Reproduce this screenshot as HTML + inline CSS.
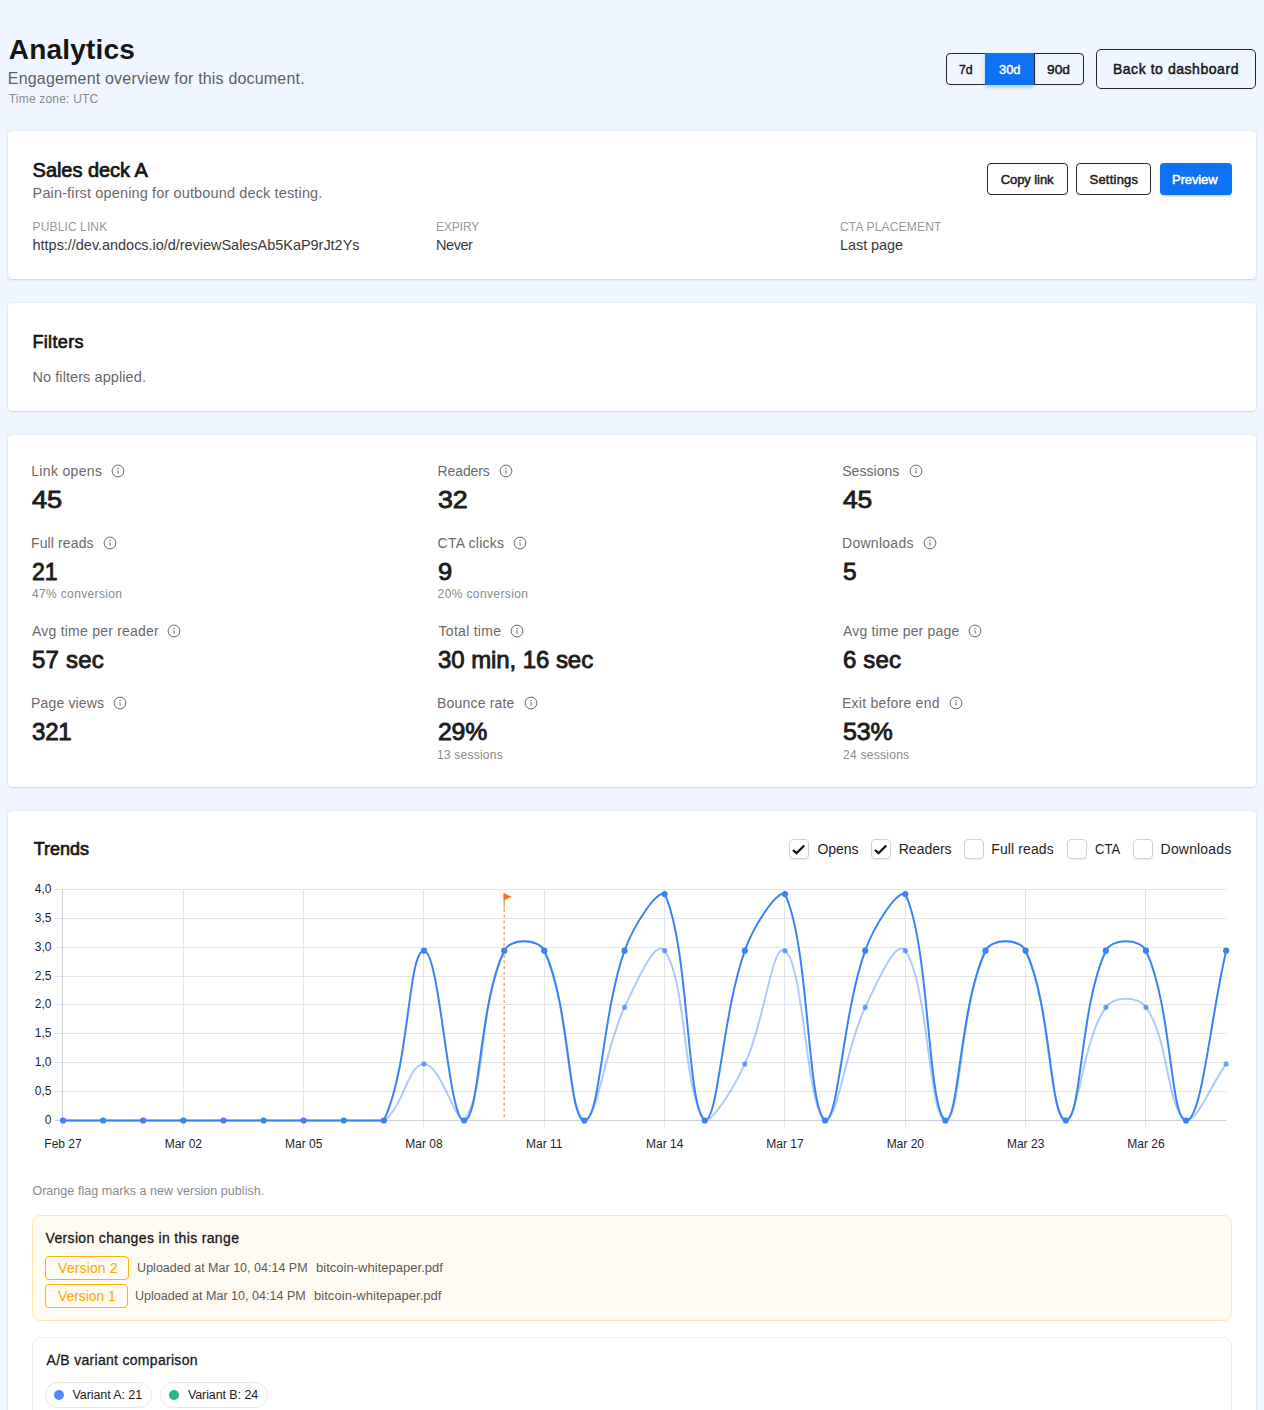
<!DOCTYPE html>
<html><head><meta charset="utf-8">
<style>
*{box-sizing:border-box;margin:0;padding:0}
html,body{width:1264px;height:1410px;overflow:hidden}
body{background:#eff6ff;font-family:"Liberation Sans",sans-serif;position:relative}
.t{position:absolute;white-space:nowrap;line-height:20px}
.card{position:absolute;left:8px;width:1248px;background:#fff;border-radius:4px;box-shadow:0 0 0 1px rgba(40,60,100,0.03),0 1px 2px rgba(30,40,70,0.14)}
.btn{position:absolute;border:1px solid #262626;border-radius:4px;background:transparent}
.blue{position:absolute;background:#0f71f3;border-radius:4px;box-shadow:0 2px 2px -1px rgba(15,113,243,0.4)}
.bt{position:absolute;white-space:nowrap;line-height:20px;font-weight:700;font-size:13px;color:#1a1a1a}
.ic{position:absolute;width:14px;height:14px}
.cb{position:absolute;width:20px;height:20px;border:1px solid #d2d2d2;border-radius:4px;background:#fff;box-shadow:0 1px 1px rgba(0,0,0,0.07)}
.cb svg{position:absolute;left:0;top:0}
.vbox{position:absolute;left:32px;top:1215px;width:1200px;height:106px;background:#fffaf2;border:1px solid #fde6ad;border-radius:8px}
.badge{position:absolute;border:1px solid #ffb10a;border-radius:4px}
.abbox{position:absolute;left:32px;top:1337px;width:1200px;height:120px;background:#fff;border:1px solid #ececec;border-radius:8px}
.pill{position:absolute;border:1px solid #e8e8e8;border-radius:13px;background:#fff}
.dot{position:absolute;width:10px;height:10px;border-radius:50%}
</style></head><body>
<!-- header buttons -->
<div class="btn" style="left:946px;top:53px;width:138px;height:32px"></div>
<div class="blue" style="left:985px;top:53px;width:49px;height:32px;border-radius:0;box-shadow:0 2px 4px rgba(15,113,243,0.32)"></div>
<div style="position:absolute;left:1034px;top:53px;width:1px;height:32px;background:#262626"></div>
<div class="btn" style="left:1096px;top:49px;width:160px;height:40px;border-radius:5px"></div>

<div class="card" style="top:131px;height:148px"></div>
<div class="card" style="top:303px;height:108px"></div>
<div class="card" style="top:435px;height:352px"></div>
<div class="card" style="top:811px;height:620px"></div>

<!-- card1 buttons -->
<div class="btn" style="left:987px;top:163px;width:81px;height:32px"></div>
<div class="btn" style="left:1076px;top:163px;width:75px;height:32px"></div>
<div class="blue" style="left:1159.5px;top:163px;width:72.5px;height:32px"></div>

<!-- checkboxes -->
<div class="cb" style="left:789px;top:839px"><svg width="18" height="18" viewBox="0 0 18 18"><path d="M3 10 L6.5 13.2 L14.2 5.5" fill="none" stroke="#111" stroke-width="2.3" stroke-linecap="butt" stroke-linejoin="miter"/></svg></div>
<div class="cb" style="left:871px;top:839px"><svg width="18" height="18" viewBox="0 0 18 18"><path d="M3 10 L6.5 13.2 L14.2 5.5" fill="none" stroke="#111" stroke-width="2.3" stroke-linecap="butt" stroke-linejoin="miter"/></svg></div>
<div class="cb" style="left:964px;top:839px"></div>
<div class="cb" style="left:1066.5px;top:839px"></div>
<div class="cb" style="left:1132.5px;top:839px"></div>

<div class="vbox"></div>
<div class="badge" style="left:45px;top:1256px;width:84px;height:23.5px"></div>
<div class="badge" style="left:45px;top:1284px;width:83px;height:23.5px"></div>
<div class="abbox"></div>
<div class="pill" style="left:45px;top:1382px;width:107px;height:25.5px"></div>
<div class="pill" style="left:160px;top:1382px;width:108px;height:25.5px"></div>
<div class="dot" style="left:54px;top:1389.5px;background:#4c8bf5"></div>
<div class="dot" style="left:169px;top:1389.5px;background:#2ab583"></div>

<svg width="1264" height="1410" style="position:absolute;left:0;top:0;pointer-events:none"><g stroke="#e2e5eb" stroke-width="1" fill="none"><line x1="55" y1="1120.5" x2="1226.2" y2="1120.5"/><line x1="55" y1="1091.5" x2="1226.2" y2="1091.5"/><line x1="55" y1="1062.5" x2="1226.2" y2="1062.5"/><line x1="55" y1="1033.5" x2="1226.2" y2="1033.5"/><line x1="55" y1="1004.5" x2="1226.2" y2="1004.5"/><line x1="55" y1="976.5" x2="1226.2" y2="976.5"/><line x1="55" y1="947.5" x2="1226.2" y2="947.5"/><line x1="55" y1="918.5" x2="1226.2" y2="918.5"/><line x1="55" y1="889.5" x2="1226.2" y2="889.5"/><line x1="183.5" y1="889.5" x2="183.5" y2="1128.5"/><line x1="303.5" y1="889.5" x2="303.5" y2="1128.5"/><line x1="423.5" y1="889.5" x2="423.5" y2="1128.5"/><line x1="544.5" y1="889.5" x2="544.5" y2="1128.5"/><line x1="664.5" y1="889.5" x2="664.5" y2="1128.5"/><line x1="784.5" y1="889.5" x2="784.5" y2="1128.5"/><line x1="905.5" y1="889.5" x2="905.5" y2="1128.5"/><line x1="1025.5" y1="889.5" x2="1025.5" y2="1128.5"/><line x1="1145.5" y1="889.5" x2="1145.5" y2="1128.5"/></g><line x1="62.5" y1="889.5" x2="62.5" y2="1128.5" stroke="#ccd0d8" stroke-width="1"/><line x1="55" y1="1120.5" x2="1226.2" y2="1120.5" stroke="#ccd0d8" stroke-width="1"/><g font-family="Liberation Sans" font-size="12" fill="#1f2430"><text x="51.5" y="1123.90" text-anchor="end">0</text><text x="51.5" y="1094.90" text-anchor="end">0,5</text><text x="51.5" y="1065.90" text-anchor="end">1,0</text><text x="51.5" y="1036.90" text-anchor="end">1,5</text><text x="51.5" y="1007.90" text-anchor="end">2,0</text><text x="51.5" y="979.90" text-anchor="end">2,5</text><text x="51.5" y="950.90" text-anchor="end">3,0</text><text x="51.5" y="921.90" text-anchor="end">3,5</text><text x="51.5" y="892.90" text-anchor="end">4,0</text><text x="63.00" y="1148" text-anchor="middle">Feb 27</text><text x="183.33" y="1148" text-anchor="middle">Mar 02</text><text x="303.66" y="1148" text-anchor="middle">Mar 05</text><text x="423.99" y="1148" text-anchor="middle">Mar 08</text><text x="544.32" y="1148" text-anchor="middle">Mar 11</text><text x="664.65" y="1148" text-anchor="middle">Mar 14</text><text x="784.98" y="1148" text-anchor="middle">Mar 17</text><text x="905.31" y="1148" text-anchor="middle">Mar 20</text><text x="1025.64" y="1148" text-anchor="middle">Mar 23</text><text x="1145.97" y="1148" text-anchor="middle">Mar 26</text></g><path d="M63.00,1120.50 C79.04,1120.50 87.07,1120.50 103.11,1120.50 C119.15,1120.50 127.18,1120.50 143.22,1120.50 C159.26,1120.50 167.29,1120.50 183.33,1120.50 C199.37,1120.50 207.40,1120.50 223.44,1120.50 C239.48,1120.50 247.51,1120.50 263.55,1120.50 C279.59,1120.50 287.62,1120.50 303.66,1120.50 C319.70,1120.50 327.73,1120.50 343.77,1120.50 C359.81,1120.50 372.12,1120.50 383.88,1120.50 C404.21,1106.15 407.95,1063.90 423.99,1063.90 C440.03,1063.90 454.97,1120.50 464.10,1120.50 C487.06,1088.10 478.12,1005.92 504.21,950.70 C510.21,938.00 538.32,938.00 544.32,950.70 C570.41,1005.92 565.42,1107.09 584.43,1120.50 C597.51,1120.50 604.20,1050.35 624.54,1007.30 C636.29,982.43 655.52,937.82 664.65,950.70 C687.61,983.10 681.80,1088.10 704.76,1120.50 C713.89,1120.50 733.12,1088.77 744.87,1063.90 C765.21,1020.85 771.90,941.47 784.98,950.70 C803.99,964.11 806.08,1107.09 825.09,1120.50 C838.17,1120.50 844.86,1050.35 865.20,1007.30 C876.95,982.43 896.18,937.82 905.31,950.70 C928.27,983.10 929.38,1120.50 945.42,1120.50 C961.46,1120.50 959.44,1005.92 985.53,950.70 C991.53,938.00 1019.64,938.00 1025.64,950.70 C1051.73,1005.92 1046.74,1107.09 1065.75,1120.50 C1078.83,1120.50 1081.81,1041.24 1105.86,1007.30 C1113.89,995.96 1137.94,995.96 1145.97,1007.30 C1170.02,1041.24 1165.74,1106.15 1186.08,1120.50 C1197.83,1120.50 1210.15,1086.54 1226.19,1063.90" fill="none" stroke="rgba(59,130,246,0.42)" stroke-width="2"/><g fill="rgba(59,130,246,0.7)"><circle cx="63.00" cy="1120.50" r="2.6"/><circle cx="103.11" cy="1120.50" r="2.6"/><circle cx="143.22" cy="1120.50" r="2.6"/><circle cx="183.33" cy="1120.50" r="2.6"/><circle cx="223.44" cy="1120.50" r="2.6"/><circle cx="263.55" cy="1120.50" r="2.6"/><circle cx="303.66" cy="1120.50" r="2.6"/><circle cx="343.77" cy="1120.50" r="2.6"/><circle cx="383.88" cy="1120.50" r="2.6"/><circle cx="423.99" cy="1063.90" r="2.6"/><circle cx="464.10" cy="1120.50" r="2.6"/><circle cx="504.21" cy="950.70" r="2.6"/><circle cx="544.32" cy="950.70" r="2.6"/><circle cx="584.43" cy="1120.50" r="2.6"/><circle cx="624.54" cy="1007.30" r="2.6"/><circle cx="664.65" cy="950.70" r="2.6"/><circle cx="704.76" cy="1120.50" r="2.6"/><circle cx="744.87" cy="1063.90" r="2.6"/><circle cx="784.98" cy="950.70" r="2.6"/><circle cx="825.09" cy="1120.50" r="2.6"/><circle cx="865.20" cy="1007.30" r="2.6"/><circle cx="905.31" cy="950.70" r="2.6"/><circle cx="945.42" cy="1120.50" r="2.6"/><circle cx="985.53" cy="950.70" r="2.6"/><circle cx="1025.64" cy="950.70" r="2.6"/><circle cx="1065.75" cy="1120.50" r="2.6"/><circle cx="1105.86" cy="1007.30" r="2.6"/><circle cx="1145.97" cy="1007.30" r="2.6"/><circle cx="1186.08" cy="1120.50" r="2.6"/><circle cx="1226.19" cy="1063.90" r="2.6"/></g><path d="M63.00,1120.50 C79.04,1120.50 87.07,1120.50 103.11,1120.50 C119.15,1120.50 127.18,1120.50 143.22,1120.50 C159.26,1120.50 167.29,1120.50 183.33,1120.50 C199.37,1120.50 207.40,1120.50 223.44,1120.50 C239.48,1120.50 247.51,1120.50 263.55,1120.50 C279.59,1120.50 287.62,1120.50 303.66,1120.50 C319.70,1120.50 327.73,1120.50 343.77,1120.50 C359.81,1120.50 377.88,1120.50 383.88,1120.50 C409.97,1065.28 407.95,950.70 423.99,950.70 C440.03,950.70 448.06,1120.50 464.10,1120.50 C480.14,1120.50 478.12,1005.92 504.21,950.70 C510.21,938.00 538.32,938.00 544.32,950.70 C570.41,1005.92 568.39,1120.50 584.43,1120.50 C600.47,1120.50 601.58,1015.50 624.54,950.70 C633.67,924.94 657.21,889.50 664.65,894.10 C689.30,946.28 686.52,1107.63 704.76,1120.50 C718.60,1120.50 721.91,1015.50 744.87,950.70 C754.00,924.94 777.54,889.50 784.98,894.10 C809.63,946.28 806.85,1107.63 825.09,1120.50 C838.93,1120.50 842.24,1015.50 865.20,950.70 C874.33,924.94 897.87,889.50 905.31,894.10 C929.96,946.28 927.18,1107.63 945.42,1120.50 C959.26,1120.50 959.44,1005.92 985.53,950.70 C991.53,938.00 1019.64,938.00 1025.64,950.70 C1051.73,1005.92 1049.71,1120.50 1065.75,1120.50 C1081.79,1120.50 1079.77,1005.92 1105.86,950.70 C1111.86,938.00 1139.97,938.00 1145.97,950.70 C1172.06,1005.92 1170.04,1120.50 1186.08,1120.50 C1202.12,1120.50 1210.15,1018.62 1226.19,950.70" fill="none" stroke="#3b82f6" stroke-width="2"/><g fill="#3b82f6"><circle cx="63.00" cy="1120.50" r="3.1"/><circle cx="103.11" cy="1120.50" r="3.1"/><circle cx="143.22" cy="1120.50" r="3.1"/><circle cx="183.33" cy="1120.50" r="3.1"/><circle cx="223.44" cy="1120.50" r="3.1"/><circle cx="263.55" cy="1120.50" r="3.1"/><circle cx="303.66" cy="1120.50" r="3.1"/><circle cx="343.77" cy="1120.50" r="3.1"/><circle cx="383.88" cy="1120.50" r="3.1"/><circle cx="423.99" cy="950.70" r="3.1"/><circle cx="464.10" cy="1120.50" r="3.1"/><circle cx="504.21" cy="950.70" r="3.1"/><circle cx="544.32" cy="950.70" r="3.1"/><circle cx="584.43" cy="1120.50" r="3.1"/><circle cx="624.54" cy="950.70" r="3.1"/><circle cx="664.65" cy="894.10" r="3.1"/><circle cx="704.76" cy="1120.50" r="3.1"/><circle cx="744.87" cy="950.70" r="3.1"/><circle cx="784.98" cy="894.10" r="3.1"/><circle cx="825.09" cy="1120.50" r="3.1"/><circle cx="865.20" cy="950.70" r="3.1"/><circle cx="905.31" cy="894.10" r="3.1"/><circle cx="945.42" cy="1120.50" r="3.1"/><circle cx="985.53" cy="950.70" r="3.1"/><circle cx="1025.64" cy="950.70" r="3.1"/><circle cx="1065.75" cy="1120.50" r="3.1"/><circle cx="1105.86" cy="950.70" r="3.1"/><circle cx="1145.97" cy="950.70" r="3.1"/><circle cx="1186.08" cy="1120.50" r="3.1"/><circle cx="1226.19" cy="950.70" r="3.1"/></g><line x1="504.21" y1="908" x2="504.21" y2="1120" stroke="rgba(249,115,22,0.65)" stroke-width="1.5" stroke-dasharray="2.9 2.8" stroke-dashoffset="-1"/><line x1="504.21" y1="893" x2="504.21" y2="908" stroke="rgba(249,115,22,0.65)" stroke-width="1.5"/><path d="M503.61,893 L511.71,896.8 L503.61,900.5 Z" fill="#f97316"/></svg>
<div class="t" id="t0" style="left:8.8px;top:40.30px;font-size:28px;font-weight:700;color:#151515;letter-spacing:0.2px">Analytics</div>
<div class="t" id="t1" style="left:7.8px;top:68.96px;font-size:16px;font-weight:400;color:#5f5f5f;letter-spacing:0.186px">Engagement overview for this document.</div>
<div class="t" id="t2" style="left:8.8px;top:88.84px;font-size:12px;font-weight:400;color:#8a8a8a;letter-spacing:0.19px">Time zone: UTC</div>
<div class="t" id="t3" style="left:32.6px;top:160.07px;font-size:20px;font-weight:400;color:#151515;-webkit-text-stroke:0.72px #151515;letter-spacing:-0.044999999999999984px">Sales deck A</div>
<div class="t" id="t4" style="left:32.6px;top:183.38px;font-size:14.5px;font-weight:400;color:#6a6a6a;letter-spacing:0.136px">Pain-first opening for outbound deck testing.</div>
<div class="t" id="t5" style="left:32.6px;top:217.04px;font-size:12px;font-weight:400;color:#9a9a9a;letter-spacing:0.12000000000000001px">PUBLIC LINK</div>
<div class="t" id="t6" style="left:32.6px;top:235.28px;font-size:14.5px;font-weight:400;color:#3a3a3a;letter-spacing:-0.035px">https://dev.andocs.io/d/reviewSalesAb5KaP9rJt2Ys</div>
<div class="t" id="t7" style="left:436.0px;top:217.04px;font-size:12px;font-weight:400;color:#9a9a9a;letter-spacing:-0.1px">EXPIRY</div>
<div class="t" id="t8" style="left:436.0px;top:235.28px;font-size:14.5px;font-weight:400;color:#3a3a3a;letter-spacing:-0.45px">Never</div>
<div class="t" id="t9" style="left:840.0px;top:217.04px;font-size:12px;font-weight:400;color:#9a9a9a;letter-spacing:0.183px">CTA PLACEMENT</div>
<div class="t" id="t10" style="left:840.0px;top:235.28px;font-size:14.5px;font-weight:400;color:#3a3a3a;letter-spacing:-0.06899999999999999px">Last page</div>
<div class="t" id="t11" style="left:32.4px;top:331.56px;font-size:18px;font-weight:400;color:#151515;-webkit-text-stroke:0.65px #151515;letter-spacing:0.366px">Filters</div>
<div class="t" id="t12" style="left:32.4px;top:366.98px;font-size:14.5px;font-weight:400;color:#6a6a6a;letter-spacing:0.085px">No filters applied.</div>
<div class="t" id="t13" style="left:31.2px;top:461.15px;font-size:14px;font-weight:400;color:#6b6b6b;letter-spacing:0.33599999999999997px">Link opens</div>
<div class="t" id="t14" style="left:32.0px;top:489.68px;font-size:24px;font-weight:400;color:#1c1c1c;-webkit-text-stroke:0.86px #1c1c1c;letter-spacing:-0.2px;transform:scaleX(1.1316);transform-origin:0 0">45</div>
<div class="t" id="t15" style="left:437.6px;top:461.15px;font-size:14px;font-weight:400;color:#6b6b6b;letter-spacing:-0.117px">Readers</div>
<div class="t" id="t16" style="left:437.6px;top:489.68px;font-size:24px;font-weight:400;color:#1c1c1c;-webkit-text-stroke:0.86px #1c1c1c;letter-spacing:-0.2px;transform:scaleX(1.1154);transform-origin:0 0">32</div>
<div class="t" id="t17" style="left:842.2px;top:461.15px;font-size:14px;font-weight:400;color:#6b6b6b;letter-spacing:0.051000000000000004px">Sessions</div>
<div class="t" id="t18" style="left:843.2px;top:489.68px;font-size:24px;font-weight:400;color:#1c1c1c;-webkit-text-stroke:0.86px #1c1c1c;letter-spacing:-0.2px;transform:scaleX(1.0982);transform-origin:0 0">45</div>
<div class="t" id="t19" style="left:31.0px;top:533.15px;font-size:14px;font-weight:400;color:#6b6b6b;letter-spacing:0.11900000000000001px">Full reads</div>
<div class="t" id="t20" style="left:32.0px;top:561.68px;font-size:24px;font-weight:400;color:#1c1c1c;-webkit-text-stroke:0.86px #1c1c1c;letter-spacing:-0.2px;transform:scaleX(0.9630);transform-origin:0 0">21</div>
<div class="t" id="t21" style="left:32.0px;top:584.44px;font-size:12px;font-weight:400;color:#8a8a8a;letter-spacing:0.354px">47% conversion</div>
<div class="t" id="t22" style="left:437.6px;top:533.15px;font-size:14px;font-weight:400;color:#6b6b6b;letter-spacing:0.22999999999999998px">CTA clicks</div>
<div class="t" id="t23" style="left:437.6px;top:561.68px;font-size:24px;font-weight:400;color:#1c1c1c;-webkit-text-stroke:0.86px #1c1c1c;letter-spacing:-0.2px;transform:scaleX(1.0626);transform-origin:0 0">9</div>
<div class="t" id="t24" style="left:437.6px;top:584.44px;font-size:12px;font-weight:400;color:#8a8a8a;letter-spacing:0.379px">20% conversion</div>
<div class="t" id="t25" style="left:842.0px;top:533.15px;font-size:14px;font-weight:400;color:#6b6b6b;letter-spacing:0.275px">Downloads</div>
<div class="t" id="t26" style="left:843.0px;top:561.68px;font-size:24px;font-weight:400;color:#1c1c1c;-webkit-text-stroke:0.86px #1c1c1c;letter-spacing:-0.2px;transform:scaleX(1.0169);transform-origin:0 0">5</div>
<div class="t" id="t27" style="left:32.0px;top:621.15px;font-size:14px;font-weight:400;color:#6b6b6b;letter-spacing:0.22699999999999998px">Avg time per reader</div>
<div class="t" id="t28" style="left:32.0px;top:649.68px;font-size:24px;font-weight:400;color:#1c1c1c;-webkit-text-stroke:0.86px #1c1c1c;letter-spacing:0.2px">57 sec</div>
<div class="t" id="t29" style="left:438.6px;top:621.15px;font-size:14px;font-weight:400;color:#6b6b6b;letter-spacing:0.272px">Total time</div>
<div class="t" id="t30" style="left:438.0px;top:649.68px;font-size:24px;font-weight:400;color:#1c1c1c;-webkit-text-stroke:0.86px #1c1c1c;letter-spacing:-0.07300000000000001px">30 min, 16 sec</div>
<div class="t" id="t31" style="left:843.0px;top:621.15px;font-size:14px;font-weight:400;color:#6b6b6b;letter-spacing:0.175px">Avg time per page</div>
<div class="t" id="t32" style="left:843.0px;top:649.68px;font-size:24px;font-weight:400;color:#1c1c1c;-webkit-text-stroke:0.86px #1c1c1c;letter-spacing:0.14999999999999997px">6 sec</div>
<div class="t" id="t33" style="left:31.0px;top:693.15px;font-size:14px;font-weight:400;color:#6b6b6b;letter-spacing:0.161px">Page views</div>
<div class="t" id="t34" style="left:32.0px;top:721.68px;font-size:24px;font-weight:400;color:#1c1c1c;-webkit-text-stroke:0.86px #1c1c1c;letter-spacing:-0.2px;transform:scaleX(1.0026);transform-origin:0 0">321</div>
<div class="t" id="t35" style="left:437.0px;top:693.15px;font-size:14px;font-weight:400;color:#6b6b6b;letter-spacing:0.19px">Bounce rate</div>
<div class="t" id="t36" style="left:438.0px;top:721.68px;font-size:24px;font-weight:400;color:#1c1c1c;-webkit-text-stroke:0.86px #1c1c1c;letter-spacing:-0.2px;transform:scaleX(1.0345);transform-origin:0 0">29%</div>
<div class="t" id="t37" style="left:437.0px;top:744.84px;font-size:12px;font-weight:400;color:#8a8a8a;letter-spacing:0.22999999999999998px">13 sessions</div>
<div class="t" id="t38" style="left:842.0px;top:693.15px;font-size:14px;font-weight:400;color:#6b6b6b;letter-spacing:0.23299999999999998px">Exit before end</div>
<div class="t" id="t39" style="left:843.0px;top:721.68px;font-size:24px;font-weight:400;color:#1c1c1c;-webkit-text-stroke:0.86px #1c1c1c;letter-spacing:-0.2px;transform:scaleX(1.0429);transform-origin:0 0">53%</div>
<div class="t" id="t40" style="left:843.0px;top:744.84px;font-size:12px;font-weight:400;color:#8a8a8a;letter-spacing:0.27px">24 sessions</div>
<div class="t" id="t41" style="left:33.8px;top:839.46px;font-size:18px;font-weight:400;color:#151515;-webkit-text-stroke:0.65px #151515;letter-spacing:-0.019999999999999962px">Trends</div>
<div class="t" id="t42" style="left:32.4px;top:1181.07px;font-size:12.5px;font-weight:400;color:#8a8a8a;letter-spacing:0.04800000000000001px">Orange flag marks a new version publish.</div>
<div class="t" id="t43" style="left:45.5px;top:1227.75px;font-size:14px;font-weight:400;color:#1a1a1a;-webkit-text-stroke:0.30px #1a1a1a;letter-spacing:0.34800000000000003px">Version changes in this range</div>
<div class="t" id="t44" style="left:137.1px;top:1257.87px;font-size:12.5px;font-weight:400;color:#5a5a5a;letter-spacing:0.01px">Uploaded at Mar 10, 04:14 PM</div>
<div class="t" id="t45" style="left:316.0px;top:1257.70px;font-size:13px;font-weight:400;color:#5a5a5a;letter-spacing:0.024px">bitcoin-whitepaper.pdf</div>
<div class="t" id="t46" style="left:134.9px;top:1285.87px;font-size:12.5px;font-weight:400;color:#5a5a5a;letter-spacing:0.021px">Uploaded at Mar 10, 04:14 PM</div>
<div class="t" id="t47" style="left:314.0px;top:1285.70px;font-size:13px;font-weight:400;color:#5a5a5a;letter-spacing:0.048px">bitcoin-whitepaper.pdf</div>
<div class="t" id="t48" style="left:46.5px;top:1349.75px;font-size:14px;font-weight:400;color:#1a1a1a;-webkit-text-stroke:0.30px #1a1a1a;letter-spacing:0.299px">A/B variant comparison</div>
<div class="t" id="t49" style="left:72.5px;top:1385.37px;font-size:12.5px;font-weight:400;color:#222;letter-spacing:-0.083px">Variant A: 21</div>
<div class="t" id="t50" style="left:187.9px;top:1385.37px;font-size:12.5px;font-weight:400;color:#222;letter-spacing:-0.085px">Variant B: 24</div>
<div class="t" id="t51" style="left:959.2px;top:59.50px;font-size:13px;font-weight:400;color:#1a1a1a;-webkit-text-stroke:0.47px #1a1a1a;transform:scaleX(0.9474);transform-origin:0 0">7d</div>
<div class="t" id="t52" style="left:998.8px;top:59.50px;font-size:13px;font-weight:400;color:#ffffff;-webkit-text-stroke:0.47px #ffffff;transform:scaleX(0.9918);transform-origin:0 0">30d</div>
<div class="t" id="t53" style="left:1047.2px;top:59.50px;font-size:13px;font-weight:400;color:#1a1a1a;-webkit-text-stroke:0.47px #1a1a1a;transform:scaleX(1.0568);transform-origin:0 0">90d</div>
<div class="t" id="t54" style="left:1112.9px;top:59.15px;font-size:14px;font-weight:400;color:#1a1a1a;-webkit-text-stroke:0.50px #1a1a1a;letter-spacing:0.551px">Back to dashboard</div>
<div class="t" id="t55" style="left:1000.7px;top:169.50px;font-size:13px;font-weight:400;color:#1a1a1a;-webkit-text-stroke:0.47px #1a1a1a;letter-spacing:-0.07499999999999998px">Copy link</div>
<div class="t" id="t56" style="left:1089.5px;top:169.50px;font-size:13px;font-weight:400;color:#1a1a1a;-webkit-text-stroke:0.47px #1a1a1a;letter-spacing:0.22899999999999998px">Settings</div>
<div class="t" id="t57" style="left:1172.1px;top:169.50px;font-size:13px;font-weight:400;color:#ffffff;-webkit-text-stroke:0.47px #ffffff;letter-spacing:-0.136px">Preview</div>
<div class="t" id="t58" style="left:817.4px;top:838.65px;font-size:14px;font-weight:400;color:#1f1f1f;letter-spacing:-0.05px">Opens</div>
<div class="t" id="t59" style="left:898.8000000000001px;top:838.65px;font-size:14px;font-weight:400;color:#1f1f1f;letter-spacing:-0.034px">Readers</div>
<div class="t" id="t60" style="left:991.3px;top:838.65px;font-size:14px;font-weight:400;color:#1f1f1f;letter-spacing:0.111px">Full reads</div>
<div class="t" id="t61" style="left:1094.8px;top:838.65px;font-size:14px;font-weight:400;color:#1f1f1f;transform:scaleX(0.9338);transform-origin:0 0">CTA</div>
<div class="t" id="t62" style="left:1160.6000000000001px;top:838.65px;font-size:14px;font-weight:400;color:#1f1f1f;letter-spacing:0.175px">Downloads</div>
<div class="t" id="t63" style="left:58.1px;top:1257.65px;font-size:14px;font-weight:400;color:#f9a900;letter-spacing:0.144px">Version 2</div>
<div class="t" id="t64" style="left:58.1px;top:1285.65px;font-size:14px;font-weight:400;color:#f9a900;letter-spacing:-0.1px">Version 1</div>
<svg class="ic" style="left:111px;top:464px" viewBox="0 0 14 14"><circle cx="7" cy="7" r="5.9" fill="none" stroke="#6a6a6a" stroke-width="1"/><circle cx="7" cy="4.5" r="0.7" fill="#6a6a6a"/><path d="M6.5 6.4 L7 6.4 L7.2 9.6" fill="none" stroke="#6a6a6a" stroke-width="1"/></svg>
<svg class="ic" style="left:499px;top:464px" viewBox="0 0 14 14"><circle cx="7" cy="7" r="5.9" fill="none" stroke="#6a6a6a" stroke-width="1"/><circle cx="7" cy="4.5" r="0.7" fill="#6a6a6a"/><path d="M6.5 6.4 L7 6.4 L7.2 9.6" fill="none" stroke="#6a6a6a" stroke-width="1"/></svg>
<svg class="ic" style="left:908.5px;top:464px" viewBox="0 0 14 14"><circle cx="7" cy="7" r="5.9" fill="none" stroke="#6a6a6a" stroke-width="1"/><circle cx="7" cy="4.5" r="0.7" fill="#6a6a6a"/><path d="M6.5 6.4 L7 6.4 L7.2 9.6" fill="none" stroke="#6a6a6a" stroke-width="1"/></svg>
<svg class="ic" style="left:103px;top:536px" viewBox="0 0 14 14"><circle cx="7" cy="7" r="5.9" fill="none" stroke="#6a6a6a" stroke-width="1"/><circle cx="7" cy="4.5" r="0.7" fill="#6a6a6a"/><path d="M6.5 6.4 L7 6.4 L7.2 9.6" fill="none" stroke="#6a6a6a" stroke-width="1"/></svg>
<svg class="ic" style="left:513px;top:536px" viewBox="0 0 14 14"><circle cx="7" cy="7" r="5.9" fill="none" stroke="#6a6a6a" stroke-width="1"/><circle cx="7" cy="4.5" r="0.7" fill="#6a6a6a"/><path d="M6.5 6.4 L7 6.4 L7.2 9.6" fill="none" stroke="#6a6a6a" stroke-width="1"/></svg>
<svg class="ic" style="left:922.5px;top:536px" viewBox="0 0 14 14"><circle cx="7" cy="7" r="5.9" fill="none" stroke="#6a6a6a" stroke-width="1"/><circle cx="7" cy="4.5" r="0.7" fill="#6a6a6a"/><path d="M6.5 6.4 L7 6.4 L7.2 9.6" fill="none" stroke="#6a6a6a" stroke-width="1"/></svg>
<svg class="ic" style="left:167px;top:624px" viewBox="0 0 14 14"><circle cx="7" cy="7" r="5.9" fill="none" stroke="#6a6a6a" stroke-width="1"/><circle cx="7" cy="4.5" r="0.7" fill="#6a6a6a"/><path d="M6.5 6.4 L7 6.4 L7.2 9.6" fill="none" stroke="#6a6a6a" stroke-width="1"/></svg>
<svg class="ic" style="left:509.5px;top:624px" viewBox="0 0 14 14"><circle cx="7" cy="7" r="5.9" fill="none" stroke="#6a6a6a" stroke-width="1"/><circle cx="7" cy="4.5" r="0.7" fill="#6a6a6a"/><path d="M6.5 6.4 L7 6.4 L7.2 9.6" fill="none" stroke="#6a6a6a" stroke-width="1"/></svg>
<svg class="ic" style="left:968px;top:624px" viewBox="0 0 14 14"><circle cx="7" cy="7" r="5.9" fill="none" stroke="#6a6a6a" stroke-width="1"/><circle cx="7" cy="4.5" r="0.7" fill="#6a6a6a"/><path d="M6.5 6.4 L7 6.4 L7.2 9.6" fill="none" stroke="#6a6a6a" stroke-width="1"/></svg>
<svg class="ic" style="left:113px;top:696px" viewBox="0 0 14 14"><circle cx="7" cy="7" r="5.9" fill="none" stroke="#6a6a6a" stroke-width="1"/><circle cx="7" cy="4.5" r="0.7" fill="#6a6a6a"/><path d="M6.5 6.4 L7 6.4 L7.2 9.6" fill="none" stroke="#6a6a6a" stroke-width="1"/></svg>
<svg class="ic" style="left:524px;top:696px" viewBox="0 0 14 14"><circle cx="7" cy="7" r="5.9" fill="none" stroke="#6a6a6a" stroke-width="1"/><circle cx="7" cy="4.5" r="0.7" fill="#6a6a6a"/><path d="M6.5 6.4 L7 6.4 L7.2 9.6" fill="none" stroke="#6a6a6a" stroke-width="1"/></svg>
<svg class="ic" style="left:949px;top:696px" viewBox="0 0 14 14"><circle cx="7" cy="7" r="5.9" fill="none" stroke="#6a6a6a" stroke-width="1"/><circle cx="7" cy="4.5" r="0.7" fill="#6a6a6a"/><path d="M6.5 6.4 L7 6.4 L7.2 9.6" fill="none" stroke="#6a6a6a" stroke-width="1"/></svg>
</body></html>
